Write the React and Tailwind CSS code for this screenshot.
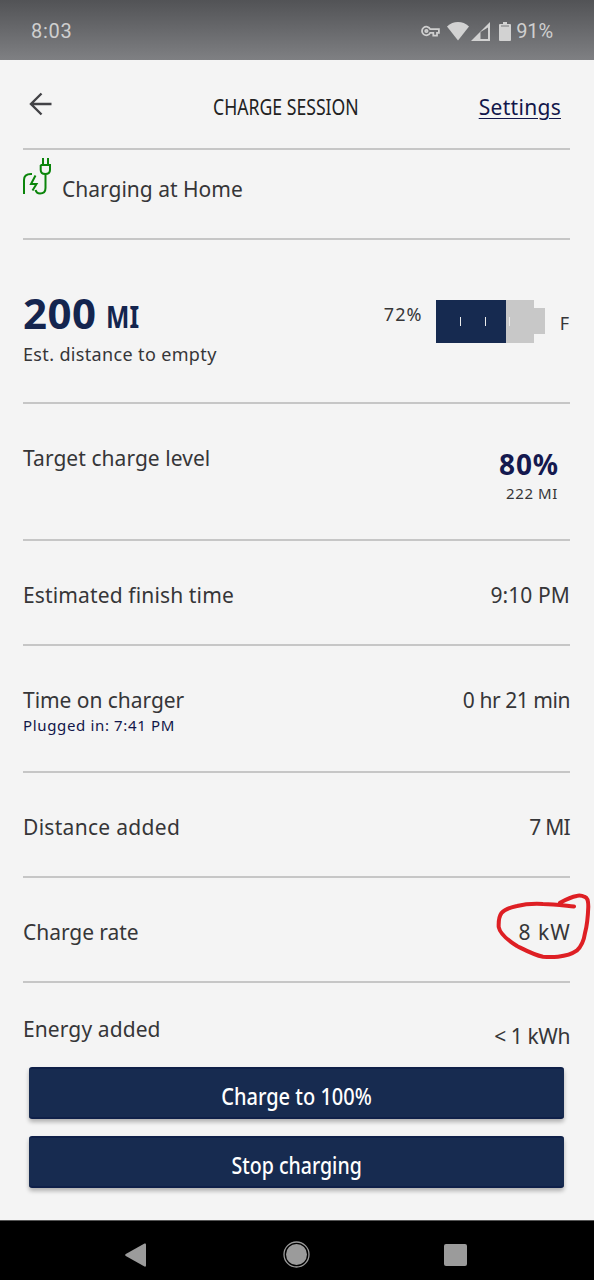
import React from "react";

const label = "text-[21px] leading-7 text-[#363638]";

// One line of the session list
const Row = ({ className = "", title, titleClass = "", sub, children }) => {
  return (
    <div className={`flex shrink-0 justify-between border-b-2 border-[#c6c6c6] ${className}`}>
      <div className="flex flex-col">
        <span className={`${label} ${titleClass}`}>{title}</span>
        {sub}
      </div>
      {children}
    </div>
  );
};

const StatusBar = () => {
  return (
    <div className="flex h-[60px] shrink-0 items-center justify-between bg-linear-to-b from-[#525356] to-[#7f8083] pr-[41px] pl-[31px] font-[Roboto] text-[20px] text-[#cfcfcf]">
      <span className="mt-0.5 tracking-[0.7px]">8:03</span>
      <div className="mt-0.5 flex items-center">
        {/* vpn key */}
        <svg width="19" height="12" viewBox="0 0 19 12" fill="none" stroke="#cfcfcf" strokeWidth="1.8">
          <path d="M9.2 4.2A4.3 4.3 0 1 0 9.2 7.8H12.3V10.6H16V7.8H17.9V4.2Z" />
          <circle cx="5.4" cy="6" r="1.2" />
        </svg>
        <svg className="ml-[7px]" width="22" height="19" viewBox="0 0 22 19" fill="#d2d2d2">
          <path d="M0 4.4C6.4-1.4 15.6-1.4 22 4.4L11 18.6Z" />
        </svg>
        <svg className="ml-0.5" width="19" height="19" viewBox="0 0 19 19" fill="#d2d2d2">
          <path fillRule="evenodd" d="M19 0V19H0ZM17 5.5L9.5 10V17H17Z" />
        </svg>
        <svg className="ml-[9px]" width="12" height="19" viewBox="0 0 12 19" fill="#d2d2d2">
          <path d="M4 0H8V2H11Q12 2 12 3V18Q12 19 11 19H1Q0 19 0 18V3Q0 2 1 2H4Z" />
          <path d="M2 4H10" stroke="#77787b" strokeWidth="1" />
        </svg>
        <span className="ml-[5px] tracking-[-0.1px]">91%</span>
      </div>
    </div>
  );
};

const BatteryLevel = () => {
  return (
    <svg width="109" height="44" viewBox="0 0 109 44" shapeRendering="crispEdges">
      <path d="M70 0H98V8H109V34H98V43H70Z" fill="#c8c8c8" />
      <rect width="70" height="43" fill="#162a50" />
      <path d="M24.5 17V26M49 17V26M73.5 17V26" stroke="#ececec" strokeWidth="1" />
    </svg>
  );
};

const ChargerIcon = () => {
  return (
    <svg width="28" height="38" viewBox="0 0 28 38" fill="none" stroke="#0b850b" strokeWidth="2">
      <path d="M1 36V22Q1 16 8 16H9" />
      <path d="M12.5 17.5L8 26H13.5L9.5 32.5" />
      <path d="M12.5 32Q13.5 35.5 17 35.5Q22.5 35.5 22.5 30V16.5" />
      <path d="M17.5 7H27V12Q27 16 22.3 16Q17.7 16 17.7 12V7" />
      <path d="M20 0V7M25 0V7" />
    </svg>
  );
};

const NavBar = () => {
  return (
    <div className="flex h-[60px] shrink-0 items-center border-t border-[#555555] bg-black pt-2 pl-[125px]">
      <svg width="21" height="24" viewBox="0 0 21 24" fill="#9b9b9b">
        <path d="M19.5 0.5Q21 0 21 1.5V22.5Q21 24 19.5 23.5L0.8 13Q-0.5 12 0.8 11Z" />
      </svg>
      <svg className="ml-[137px]" width="27" height="27" viewBox="0 0 27 27">
        <circle cx="13.5" cy="13.5" r="12.5" fill="none" stroke="#9b9b9b" strokeWidth="1.3" />
        <circle cx="13.5" cy="13.5" r="10.5" fill="#9b9b9b" />
      </svg>
      <div className="ml-[134px] h-[22px] w-[23px] rounded-[2px] bg-[#9b9b9b]" />
    </div>
  );
};

const App = () => {
  const button =
    "flex h-[52px] items-center justify-center rounded-[3px] border-y-2 border-[#0f2049] bg-[#172b50] pt-1.5 text-[23px] font-medium text-white shadow-[0_3px_4px_rgba(0,0,0,0.28)]";

  return (
    <div className="flex h-[1280px] w-[594px] flex-col overflow-hidden bg-[#f4f4f4] font-['Noto_Sans',sans-serif] text-[#363638]">
      <StatusBar />

      <div className="flex flex-1 flex-col pr-6 pl-[23px]">
        {/* Header */}
        <div className="flex h-[90px] shrink-0 items-center border-b-2 border-[#c6c6c6] pt-1.5">
          <svg className="mb-1.5 ml-1.5" width="23" height="24" viewBox="0 0 23 24" fill="none" stroke="#424246" strokeWidth="2.4">
            <path d="M12.5 1.5L2 12L12.5 22.5M2 12H22.5" />
          </svg>
          <h1 className="ml-[161px] w-[145px] origin-left scale-x-[0.84] pt-px text-[21px] whitespace-nowrap text-[#222222]">CHARGE SESSION</h1>
          <a className="mr-[9px] ml-auto pt-px text-[21px] tracking-[0.3px] text-[#12164a] underline decoration-1 underline-offset-[3px]">
            Settings
          </a>
        </div>

        <div className="flex h-[90px] shrink-0 border-b-2 border-[#c6c6c6] pt-2">
          <ChargerIcon />
          <span className={`${label} mt-[17px] ml-[11px]`}>Charging at Home</span>
        </div>

        {/* Range */}
        <div className="flex h-[164px] shrink-0 justify-between border-b-2 border-[#c6c6c6] pt-[47px]">
          <div className="flex flex-col">
            <div className="flex text-[42px] leading-[52px] font-bold text-[#14254f]">
              <span className="tracking-[0.5px]">200</span>
              <span className="ml-[9px] origin-left scale-x-[0.8] pt-[3px] text-[31px]">MI</span>
            </div>
            <span className="text-[18px] leading-6 tracking-[0.35px]">Est. distance to empty</span>
          </div>
          <div className="flex pt-[13px] text-[18px] leading-7">
            <span className="mr-[13px] tracking-[1.1px]">72%</span>
            <BatteryLevel />
            <span className="mt-[9px] mr-px ml-[15px]">F</span>
          </div>
        </div>

        <Row className="h-[137px] pt-10" title="Target charge level" titleClass="tracking-[0.05px]">
          <div className="flex flex-col items-end pt-1 pr-3">
            <span className="-mr-px text-[28px] leading-8 font-bold tracking-[0.9px] text-[#14194f]">80%</span>
            <span className="mt-[3px] text-[15px] leading-5 tracking-[0.6px]">222 MI</span>
          </div>
        </Row>

        <Row className="h-[105px] pt-10" title="Estimated finish time" titleClass="tracking-[0.14px]">
          <span className={`${label} tracking-[0.1px]`}>9:10 PM</span>
        </Row>

        <Row
          className="h-[127px] pt-10"
          title="Time on charger"
          titleClass="tracking-[-0.05px]"
          sub={<span className="-mt-px text-[15px] leading-6 tracking-[0.65px] text-[#12164a]">Plugged in: 7:41 PM</span>}
        >
          <span className={`${label} tracking-[-0.45px]`}>0 hr 21 min</span>
        </Row>

        <Row className="h-[105px] pt-10" title="Distance added" titleClass="tracking-[0.3px]">
          <span className={`${label} tracking-[-0.7px]`}>7 MI</span>
        </Row>

        <Row className="relative h-[105px] pt-10" title="Charge rate" titleClass="tracking-[-0.05px]">
          <span className={`${label} -mr-px tracking-[1.1px]`}>8 kW</span>
          {/* hand drawn circle */}
          <svg className="absolute top-[14px] -right-[22px]" width="98" height="70" viewBox="0 0 98 70" fill="none" stroke="#de1f24" strokeWidth="4" strokeLinecap="round" strokeLinejoin="round">
            <path d="M80 14.5C70 13.5 60 12 49 12C39 11.500 31 12 23 14C16 15.500 10 18 7.500 21C4.500 25 4.500 30 4.700 35C6 42 15 49 23 54C31 58 40 63 49 64.700C54 65.200 59 65.200 64 64.700C71 64 78 62 82.700 58.700C88 54 90 48 91 41C93.500 32 94 23 94.300 14.700C94.300 8 93 5.500 91 5C88 3.500 85 3 82.700 4C77 5 72 7.500 66 10.700" />
          </svg>
        </Row>

        <div className="flex h-[84px] shrink-0 justify-between pt-8">
          <span className={`${label} tracking-[0.1px]`}>Energy added</span>
          <span className={`${label} pt-[7px] tracking-[-0.4px]`}>&lt; 1 kWh</span>
        </div>

        <div className="flex flex-col gap-[17px] px-1.5">
          <button className={button}>
            <span className="scale-x-[0.87]">Charge to 100%</span>
          </button>
          <button className={button}>
            <span className="scale-x-[0.85]">Stop charging</span>
          </button>
        </div>
      </div>

      <NavBar />
    </div>
  );
};

export default App;
